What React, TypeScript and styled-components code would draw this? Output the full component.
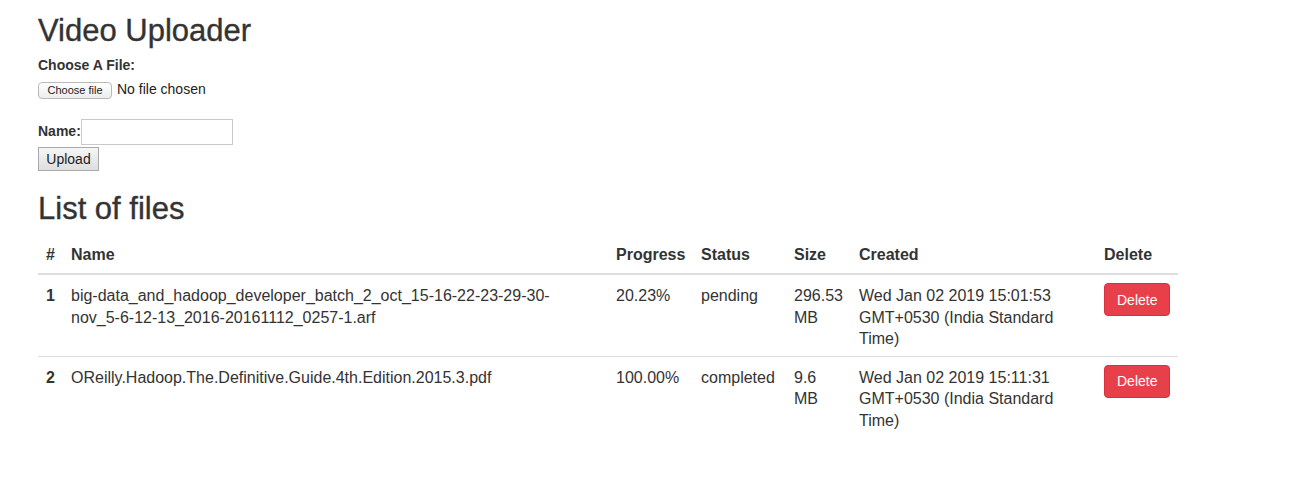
import styled, { createGlobalStyle } from "styled-components";

const GlobalStyle = createGlobalStyle`
  body {
    margin: 0;
    background: #ffffff;
    color: #333333;
    font-family: "Liberation Sans", Arial, sans-serif;
    font-size: 14px;
    line-height: 21.5px;
  }
`;

const Page = styled.div`
  width: 1140px;
  padding: 14px 0 0 38px;
`;

const Title = styled.h1`
  margin: 0 0 8px;
  font-size: 31px;
  font-weight: 400;
  line-height: 33px;
  -webkit-text-stroke: 0.35px #333333;
`;

const SectionTitle = styled.h2`
  margin: 21px 0 11px;
  font-size: 31px;
  font-weight: 400;
  line-height: 33px;
  -webkit-text-stroke: 0.35px #333333;
`;

const FieldLabel = styled.label`
  display: block;
  font-weight: 700;
`;

const FileRow = styled.div`
  display: flex;
  align-items: center;
  gap: 5px;
  margin-top: 5px;
  height: 17px;
`;

const HiddenInput = styled.input`
  display: none;
`;

const ChooseButton = styled.label`
  box-sizing: border-box;
  display: inline-flex;
  align-items: center;
  justify-content: center;
  width: 74px;
  height: 17px;
  border: 1px solid #b9b9b9;
  border-radius: 4px;
  background: linear-gradient(#ffffff, #ededed);
  font-size: 11px;
  line-height: 15px;
  color: #222;
`;

const NoFile = styled.span`
  font-size: 14px;
  color: #222;
`;

const NameRow = styled.div`
  display: flex;
  align-items: center;
  margin-top: 20px;
`;

const NameInput = styled.input`
  box-sizing: border-box;
  width: 152px;
  height: 26px;
  margin: 0;
  border: 1px solid #c9c9c9;
  outline: none;
  font: inherit;
`;

const UploadButton = styled.button`
  box-sizing: border-box;
  display: block;
  width: 61px;
  height: 24px;
  margin-top: 2px;
  padding: 0;
  border: 1px solid #a9a9a9;
  border-radius: 0;
  background: linear-gradient(#f6f6f6, #dedede);
  font-family: "Liberation Sans", Arial, sans-serif;
  font-size: 14px;
  color: #222;
`;

const Table = styled.table`
  width: 1140px;
  table-layout: fixed;
  border-collapse: collapse;
  border-spacing: 0;
  font-size: 16px;
  line-height: 21.5px;
`;

const HeadCell = styled.th<{ $w: number }>`
  width: ${(p) => p.$w - 16}px;
  padding: 8px;
  text-align: left;
  vertical-align: bottom;
  font-weight: 700;
  border-bottom: 2px solid #dddddd;
`;

const Row = styled.tr<{ $last?: boolean }>`
  border-bottom: ${(p) => (p.$last ? "none" : "1px solid #dddddd")};
`;

const Cell = styled.td<{ $bold?: boolean }>`
  padding: 10px 8px 6px;
  vertical-align: top;
  font-weight: ${(p) => (p.$bold ? 700 : 400)};
  word-wrap: break-word;
`;

const FileName = styled.span`
  display: block;
  max-width: 500px;
`;

const DeleteButton = styled.button`
  box-sizing: border-box;
  height: 33px;
  margin-top: -2px;
  padding: 0 12px;
  border: 1px solid #d8303c;
  border-radius: 4px;
  background: #e8404a;
  color: #ffffff;
  font-family: "Liberation Sans", Arial, sans-serif;
  font-size: 14px;
  line-height: 20px;
`;

const columns = [
  { label: "#", w: 25 },
  { label: "Name", w: 545 },
  { label: "Progress", w: 85 },
  { label: "Status", w: 93 },
  { label: "Size", w: 65 },
  { label: "Created", w: 245 },
  { label: "Delete", w: 82 },
];

const files = [
  {
    id: 1,
    name: "big-data_and_hadoop_developer_batch_2_oct_15-16-22-23-29-30-nov_5-6-12-13_2016-20161112_0257-1.arf",
    progress: "20.23%",
    status: "pending",
    size: "296.53 MB",
    created: "Wed Jan 02 2019 15:01:53 GMT+0530 (India Standard Time)",
  },
  {
    id: 2,
    name: "OReilly.Hadoop.The.Definitive.Guide.4th.Edition.2015.3.pdf",
    progress: "100.00%",
    status: "completed",
    size: "9.6 MB",
    created: "Wed Jan 02 2019 15:11:31 GMT+0530 (India Standard Time)",
  },
];

const App = () => {
  return (
    <>
      <GlobalStyle />
      <Page>
        <Title>Video Uploader</Title>
        <FieldLabel htmlFor="file">Choose A File:</FieldLabel>
        <FileRow>
          <HiddenInput id="file" type="file" />
          <ChooseButton htmlFor="file">Choose file</ChooseButton>
          <NoFile>No file chosen</NoFile>
        </FileRow>
        <NameRow>
          <FieldLabel htmlFor="name">Name:</FieldLabel>
          <NameInput id="name" type="text" />
        </NameRow>
        <UploadButton>Upload</UploadButton>

        <SectionTitle>List of files</SectionTitle>
        <Table>
          <thead>
            <tr>
              {columns.map((c) => (
                <HeadCell key={c.label} $w={c.w}>
                  {c.label}
                </HeadCell>
              ))}
            </tr>
          </thead>
          <tbody>
            {files.map((f, i) => (
              <Row key={f.id} $last={i === files.length - 1}>
                <Cell $bold>{f.id}</Cell>
                <Cell>
                  <FileName>{f.name}</FileName>
                </Cell>
                <Cell>{f.progress}</Cell>
                <Cell>{f.status}</Cell>
                <Cell>{f.size}</Cell>
                <Cell>{f.created}</Cell>
                <Cell>
                  <DeleteButton>Delete</DeleteButton>
                </Cell>
              </Row>
            ))}
          </tbody>
        </Table>
      </Page>
    </>
  );
};

export default App;
